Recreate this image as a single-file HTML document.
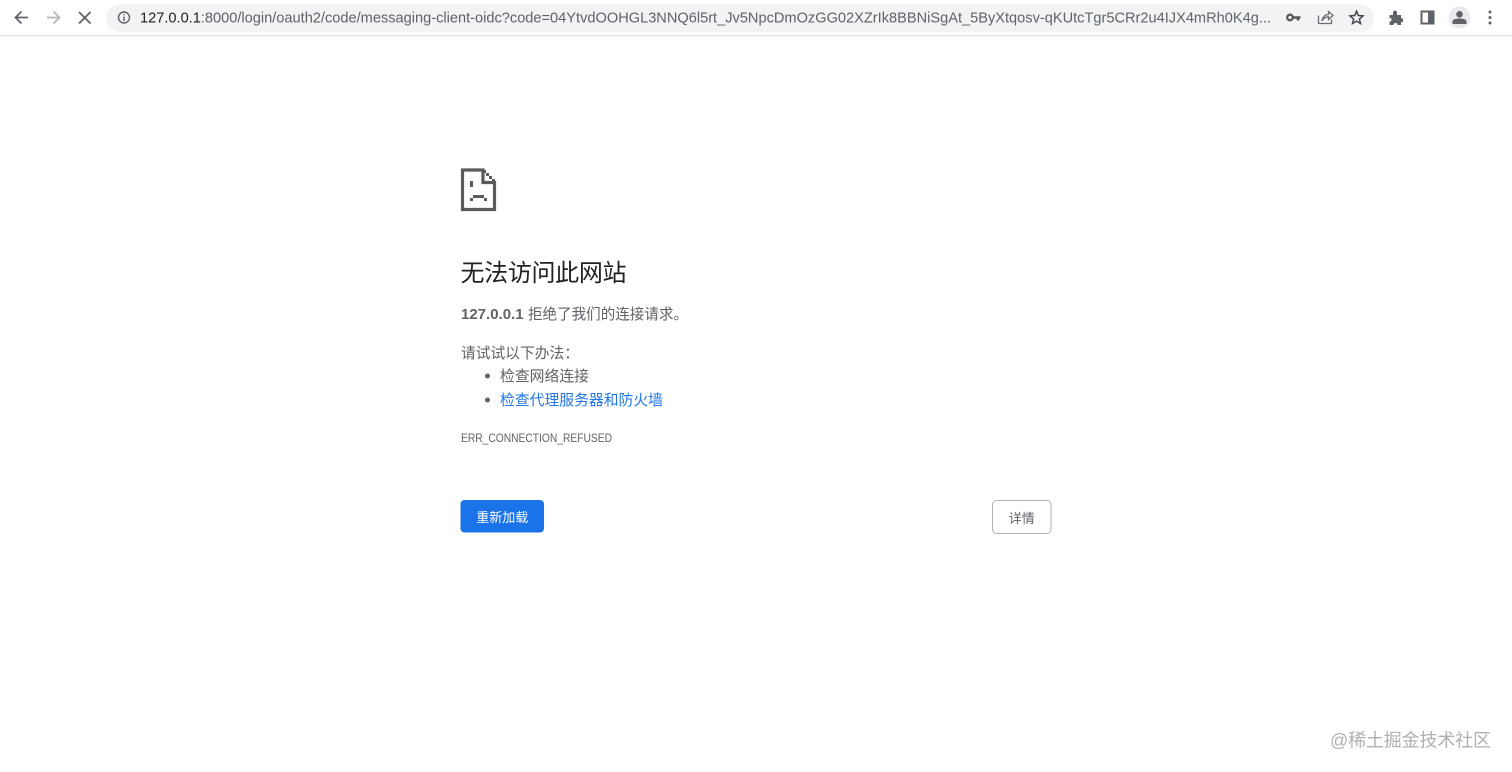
<!DOCTYPE html>
<html lang="zh">
<head>
<meta charset="utf-8">
<title>127.0.0.1</title>
<style>
html,body{margin:0;padding:0;background:#fff;width:1512px;height:772px;overflow:hidden}
svg{display:block;filter:blur(.35px)}
text{font-family:"Liberation Sans","Noto Sans CJK SC",sans-serif;white-space:pre}
</style>
</head>
<body>
<svg width="1512" height="772" viewBox="0 0 1512 772" xmlns="http://www.w3.org/2000/svg">
<rect width="1512" height="772" fill="#fff"/>
<!-- toolbar -->
<rect y="35" width="1512" height="1.5" fill="#e4e5e7"/>
<rect x="106" y="4" width="1268" height="28" rx="14" fill="#f1f3f4"/>
<!-- back -->
<path d="M28 17.5H16.5M21.5 11.5L15.5 17.5L21.5 23.5" fill="none" stroke="#5f6368" stroke-width="1.7"/>
<!-- forward -->
<path d="M47 17.5H58.5M53.5 11.5L59.5 17.5L53.5 23.5" fill="none" stroke="#b4b7ba" stroke-width="1.7"/>
<!-- stop -->
<path d="M79 12L90.500 23.500M90.500 12L79 23.500" fill="none" stroke="#5f6368" stroke-width="1.8"/>
<!-- info -->
<circle cx="124" cy="17.500" r="5.500" fill="none" stroke="#5f6368" stroke-width="1.400"/>
<path d="M124 16.500V21M124 14V15.300" stroke="#5f6368" stroke-width="1.400"/>
<!-- url -->
<text x="140" y="22.500" font-size="15" textLength="1131" lengthAdjust="spacingAndGlyphs" fill="#5f6368"><tspan fill="#202124">127.0.0.1</tspan>:8000/login/oauth2/code/messaging-client-oidc?code=04YtvdOOHGL3NNQ6l5rt_Jv5NpcDmOzGG02XZrIk8BBNiSgAt_5ByXtqosv-qKUtcTgr5CRr2u4IJX4mRh0K4g...</text>
<!-- key -->
<circle cx="1290" cy="17.500" r="2.800" fill="none" stroke="#55595d" stroke-width="2.300"/>
<path d="M1293 17.500H1300.500M1298 17.500V20.500" fill="none" stroke="#55595d" stroke-width="2.500"/>
<!-- share -->
<path d="M1318.500 15.500V23.500H1331.500V19.500" fill="none" stroke="#6b6f73" stroke-width="1.300"/>
<path d="M1322 21C1322.500 16.500 1325.500 14.500 1328.500 14.500V11.500L1333 15.500L1328.500 19.500V16.800C1326 16.800 1323.500 18 1322 21Z" fill="none" stroke="#6b6f73" stroke-width="1.300"/>
<!-- star -->
<path d="M1356.500 11.200L1358.300 15.500L1363 15.900L1359.400 19L1360.500 23.500L1356.500 21.100L1352.500 23.500L1353.600 19L1350 15.900L1354.700 15.500Z" fill="none" stroke="#45494d" stroke-width="1.500"/>
<!-- puzzle -->
<path d="M1389.500 15H1393V12.500C1393 9.800 1397 9.800 1397 12.500V15H1401V18.200C1404 17.800 1404 22.800 1401 22.400V25H1397.500C1397.800 22.300 1393.200 22.300 1393.500 25H1389.500V21.500C1392.300 21.800 1392.300 17.700 1389.500 18Z" fill="#5f6368"/>
<!-- side panel -->
<rect x="1421.500" y="11.500" width="12" height="12" fill="none" stroke="#5f6368" stroke-width="2"/>
<rect x="1428" y="11.500" width="6" height="12" fill="#5f6368"/>
<!-- avatar -->
<circle cx="1459.500" cy="17.500" r="11" fill="#e8eaed"/>
<circle cx="1459.500" cy="14.300" r="3.300" fill="#5f6368"/>
<path d="M1452.500 24V21.500C1452.500 19.200 1456.500 18.500 1459.500 18.500C1462.500 18.500 1466.500 19.200 1466.500 21.500V24Z" fill="#5f6368"/>
<!-- menu -->
<circle cx="1490" cy="12" r="1.500" fill="#5f6368"/>
<circle cx="1490" cy="17.500" r="1.500" fill="#5f6368"/>
<circle cx="1490" cy="23" r="1.500" fill="#5f6368"/>
<!-- sad page icon -->
<path d="M462.500 170H483V182.500H494.500V209.500H462.500Z" fill="none" stroke="#5a5a5a" stroke-width="3.200"/>
<path d="M483 170H486V173H483ZM486 173H489V176H486ZM489 176H492V179H489ZM492 179H495V182H492Z" fill="#5a5a5a"/>
<rect x="470" y="181" width="3" height="6" fill="#5a5a5a"/>
<path d="M473 195H484V198H473ZM470 198H473V201H470ZM484 198H487V201H484Z" fill="#5a5a5a"/>
<!-- content -->
<text x="460.500" y="281" font-size="24" fill="#202124" textLength="166">无法访问此网站</text>
<text x="461" y="319" font-size="15" font-weight="700" fill="#5f6368">127.0.0.1</text>
<text x="528" y="319" font-size="15" fill="#5f6368" textLength="160" lengthAdjust="spacingAndGlyphs">拒绝了我们的连接请求。</text>
<text x="461" y="358" font-size="15" fill="#5f6368" textLength="118" lengthAdjust="spacingAndGlyphs">请试试以下办法：</text>
<circle cx="487.500" cy="376" r="2.500" fill="#5f6368"/>
<text x="500" y="381" font-size="15" fill="#5f6368" textLength="89" lengthAdjust="spacingAndGlyphs">检查网络连接</text>
<circle cx="487.500" cy="400" r="2.500" fill="#5f6368"/>
<text x="500" y="405" font-size="15" fill="#2476e4" textLength="163" lengthAdjust="spacingAndGlyphs">检查代理服务器和防火墙</text>
<text x="461" y="442" font-size="12" fill="#5f6368" textLength="151" lengthAdjust="spacingAndGlyphs">ERR_CONNECTION_REFUSED</text>
<!-- buttons -->
<rect x="460.500" y="500" width="83.500" height="32.500" rx="4" fill="#1a73e8"/>
<text x="502.300" y="522" font-size="13" fill="#fff" text-anchor="middle">重新加载</text>
<rect x="992.500" y="500.500" width="58.500" height="33" rx="4" fill="#fff" stroke="#b0b2b5"/>
<text x="1021.800" y="523" font-size="13" fill="#5f6368" text-anchor="middle">详情</text>
<!-- watermark -->
<text x="1330" y="746.500" font-size="18" fill="#b0b0b0" textLength="161">@稀土掘金技术社区</text>
</svg>
</body>
</html>
